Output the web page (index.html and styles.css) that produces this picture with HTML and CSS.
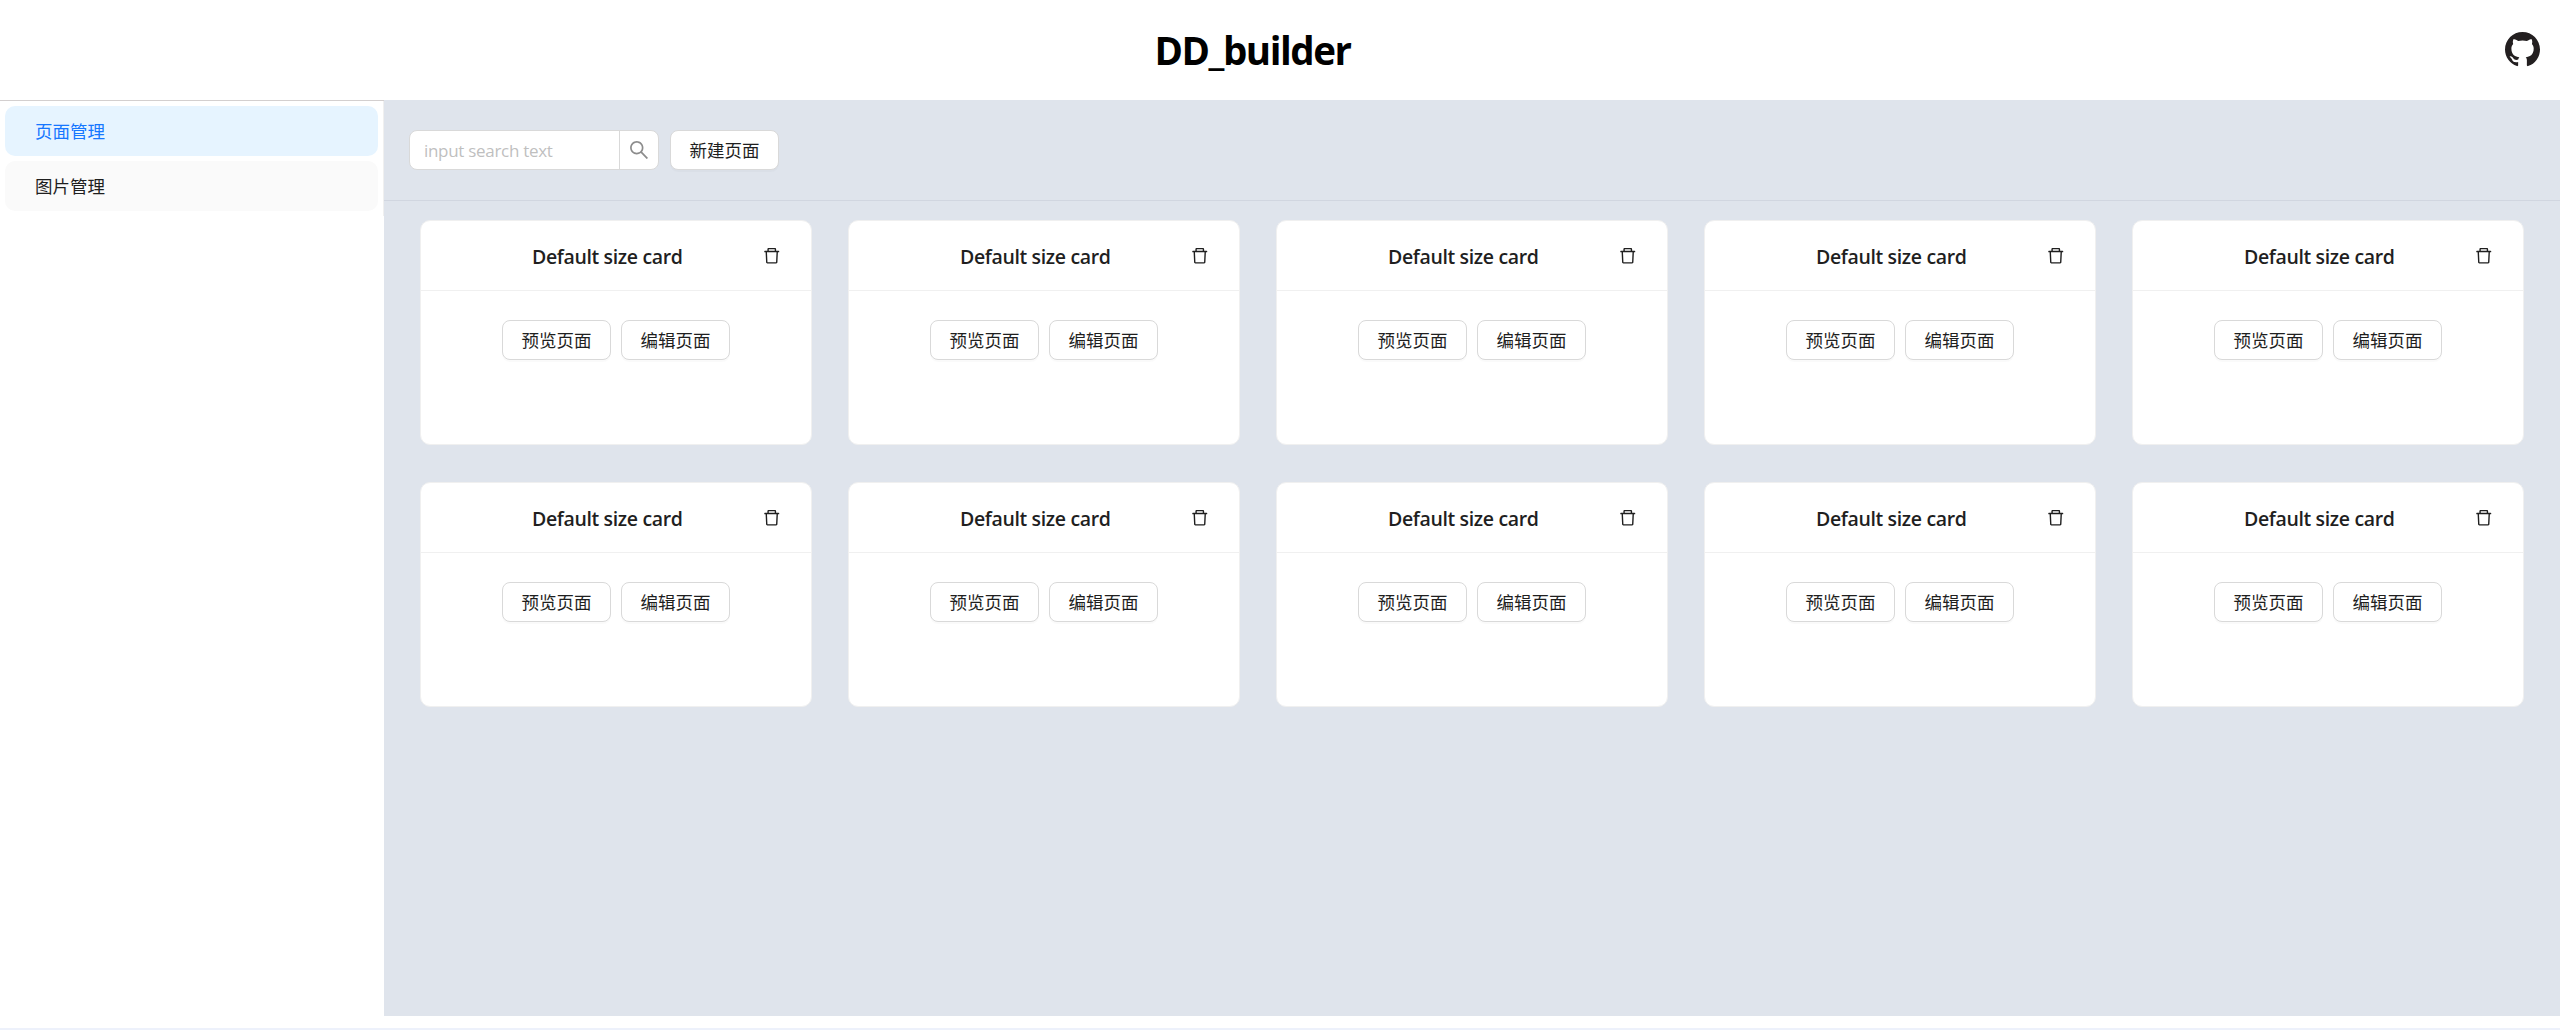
FILE: index.html
```html
<!DOCTYPE html>
<html lang="zh-CN">
<head>
<meta charset="utf-8">
<title>DD_builder</title>
<link rel="stylesheet" href="styles.css">
</head>
<body>
<svg width="0" height="0" class="sprite" aria-hidden="true">
  <symbol id="trash" viewBox="64 64 896 896"><path d="M360 184h-8c4.400 0 8-3.600 8-8v8h304v-8c0 4.400 3.600 8 8 8h-8v72h72v-80c0-35.300-28.700-64-64-64H352c-35.300 0-64 28.700-64 64v80h72v-72zm504 72H160c-17.700 0-32 14.300-32 32v32c0 4.400 3.600 8 8 8h60.400l24.700 523c1.600 34.100 29.800 61 63.900 61h454c34.200 0 62.300-26.800 63.900-61l24.700-523H888c4.400 0 8-3.600 8-8v-32c0-17.700-14.300-32-32-32zM731.300 840H292.700l-24.200-512h487l-24.200 512z"/></symbol>
</svg>
<header class="header">
  <h1 class="brand">DD_builder</h1>
  <a class="github" aria-label="GitHub"><svg viewBox="0 0 16 16" width="35" height="35"><path fill-rule="evenodd" d="M8 0C3.580 0 0 3.580 0 8c0 3.540 2.290 6.530 5.470 7.590.4.070.55-.17.55-.38 0-.19-.01-.82-.01-1.490-2.010.37-2.530-.49-2.690-.94-.09-.23-.48-.94-.82-1.130-.28-.15-.68-.52-.01-.53.63-.01 1.080.58 1.230.82.72 1.210 1.870.87 2.330.66.07-.52.28-.87.51-1.070-1.780-.2-3.640-.89-3.640-3.950 0-.87.31-1.590.82-2.150-.08-.2-.36-1.020.08-2.120 0 0 .67-.21 2.200.82.64-.18 1.320-.27 2-.27s1.360.09 2 .27c1.530-1.040 2.200-.82 2.200-.82.44 1.100.16 1.920.08 2.120.51.56.82 1.270.82 2.150 0 3.070-1.870 3.750-3.650 3.950.29.25.54.73.54 1.480 0 1.070-.01 1.930-.01 2.200 0 .21.15.46.55.38A8.013 8.013 0 0016 8c0-4.420-3.580-8-8-8z"/></svg></a>
</header>
<div class="layout">
  <aside class="sider">
    <ul class="menu">
      <li class="menu-item selected">页面管理</li>
      <li class="menu-item hover">图片管理</li>
    </ul>
  </aside>
  <main class="content">
    <div class="toolbar">
      <div class="search">
        <div class="search-input">input search text</div>
        <div class="search-btn"><svg viewBox="64 64 896 896" width="20" height="20"><path d="M909.600 854.500L649.900 594.800C690.200 542.700 712 479 712 412c0-80.200-31.300-155.400-87.900-212.100-56.600-56.700-132-87.900-212.100-87.900s-155.500 31.300-212.100 87.900C143.200 256.500 112 331.800 112 412c0 80.100 31.300 155.500 87.900 212.100C256.500 680.800 331.800 712 412 712c67 0 130.600-21.800 182.700-62l259.700 259.600a8.200 8.200 0 0011.600 0l43.600-43.500a8.200 8.200 0 000-11.600zM570.400 570.400C528 612.700 471.800 636 412 636s-116-23.300-158.400-65.600C211.300 528 188 471.800 188 412s23.300-116.100 65.600-158.400C296 211.300 352.200 188 412 188s116.100 23.200 158.400 65.600S636 352.200 636 412s-23.300 116.100-65.600 158.400z"/></svg></div>
      </div>
      <button class="btn">新建页面</button>
    </div>
    <div class="cards">
      <section class="card"><div class="card-head"><h2 class="card-title">Default size card</h2><svg class="trash"><use href="#trash"/></svg></div><div class="card-body"><button class="btn">预览页面</button><button class="btn">编辑页面</button></div></section>
      <section class="card"><div class="card-head"><h2 class="card-title">Default size card</h2><svg class="trash"><use href="#trash"/></svg></div><div class="card-body"><button class="btn">预览页面</button><button class="btn">编辑页面</button></div></section>
      <section class="card"><div class="card-head"><h2 class="card-title">Default size card</h2><svg class="trash"><use href="#trash"/></svg></div><div class="card-body"><button class="btn">预览页面</button><button class="btn">编辑页面</button></div></section>
      <section class="card"><div class="card-head"><h2 class="card-title">Default size card</h2><svg class="trash"><use href="#trash"/></svg></div><div class="card-body"><button class="btn">预览页面</button><button class="btn">编辑页面</button></div></section>
      <section class="card"><div class="card-head"><h2 class="card-title">Default size card</h2><svg class="trash"><use href="#trash"/></svg></div><div class="card-body"><button class="btn">预览页面</button><button class="btn">编辑页面</button></div></section>
      <section class="card"><div class="card-head"><h2 class="card-title">Default size card</h2><svg class="trash"><use href="#trash"/></svg></div><div class="card-body"><button class="btn">预览页面</button><button class="btn">编辑页面</button></div></section>
      <section class="card"><div class="card-head"><h2 class="card-title">Default size card</h2><svg class="trash"><use href="#trash"/></svg></div><div class="card-body"><button class="btn">预览页面</button><button class="btn">编辑页面</button></div></section>
      <section class="card"><div class="card-head"><h2 class="card-title">Default size card</h2><svg class="trash"><use href="#trash"/></svg></div><div class="card-body"><button class="btn">预览页面</button><button class="btn">编辑页面</button></div></section>
      <section class="card"><div class="card-head"><h2 class="card-title">Default size card</h2><svg class="trash"><use href="#trash"/></svg></div><div class="card-body"><button class="btn">预览页面</button><button class="btn">编辑页面</button></div></section>
      <section class="card"><div class="card-head"><h2 class="card-title">Default size card</h2><svg class="trash"><use href="#trash"/></svg></div><div class="card-body"><button class="btn">预览页面</button><button class="btn">编辑页面</button></div></section>
    </div>
  </main>
</div>
<footer class="bottom-bar"></footer>
</body>
</html>
```
FILE: styles.css
```css
* { box-sizing: border-box; }

body {
  margin: 0;
  height: 1030px;
  display: flex;
  flex-direction: column;
  overflow: hidden;
  background: #fff;
  color: #1f1f1f;
  font-family: "Open Sans", "Noto Sans CJK SC", sans-serif;
  font-size: 17.5px;
}

svg { display: block; }
.sprite { position: absolute; }

.header {
  height: 100px;
  flex: none;
  display: flex;
  align-items: center;
  padding-right: 20px;
}
.brand {
  flex: 1;
  margin: 0;
  text-align: center;
  color: #000;
  font-size: 38.5px;
  line-height: 56px;
  font-weight: 700;
  letter-spacing: -1.45px;
}
.github { fill: #231f20; margin-bottom: 2px; }

.layout {
  height: 916px;
  flex: none;
  display: flex;
}
.sider {
  width: 384px;
  flex: none;
  border-top: 1px solid #d3cfcf;
}
.menu {
  list-style: none;
  margin: 0;
  padding: 5px;
  height: 115px;
  display: flex;
  flex-direction: column;
  gap: 5px;
  border-right: 1px solid #f0f0f0;
}
.menu-item {
  height: 50px;
  line-height: 50px;
  padding-left: 30px;
  border-radius: 10px;
}
.selected { background: #e6f4ff; color: #1677ff; }
.hover { background: #fafafa; }

.content { flex: 1; background: #dfe4ec; }
.toolbar {
  height: 101px;
  padding: 30px 0 0 25px;
  display: flex;
  align-items: flex-start;
  gap: 11px;
  border-bottom: 1px solid #d1d6e0;
}
.search {
  width: 250px;
  height: 40px;
  display: flex;
  background: #fff;
  border: 1px solid #d9d9d9;
  border-radius: 8px;
}
.search-input {
  flex: 1;
  padding-left: 14px;
  line-height: 39px;
  color: #bfbfbf;
  font-size: 17px;
  letter-spacing: -0.3px;
  white-space: nowrap;
}
.search-btn {
  width: 39px;
  padding: 9px 0 0 9px;
  border-left: 1px solid #d9d9d9;
  fill: #8c8c8c;
}
.btn {
  width: 109px;
  height: 40px;
  padding: 0;
  background: #fff;
  color: #1f1f1f;
  font: inherit;
  line-height: 38px;
  border: 1px solid #d9d9d9;
  border-radius: 8px;
  box-shadow: 0 2px 0 rgba(0, 0, 0, 0.02);
}

.cards {
  display: grid;
  grid-template-columns: repeat(5, 392px);
  grid-auto-rows: 225px;
  gap: 37px 36px;
  padding: 19px 36px;
}
.card {
  background: #fff;
  border: 1px solid #f0f0f0;
  border-radius: 10px;
}
.card-head {
  height: 70px;
  display: flex;
  align-items: center;
  padding: 0 31px 0 31px;
  border-bottom: 1px solid #f0f0f0;
}
.card-title {
  flex: 1;
  margin: 0;
  padding-top: 2px;
  text-align: center;
  font-size: 19.5px;
  line-height: 30px;
  font-weight: 600;
  letter-spacing: -0.36px;
}
.trash {
  width: 17.5px;
  height: 17.5px;
  fill: #1f1f1f;
}
.card-body {
  display: flex;
  justify-content: center;
  gap: 10px;
  padding-top: 29px;
}

.bottom-bar {
  height: 2px;
  margin-top: auto;
  background: #edf1fb;
}
```
